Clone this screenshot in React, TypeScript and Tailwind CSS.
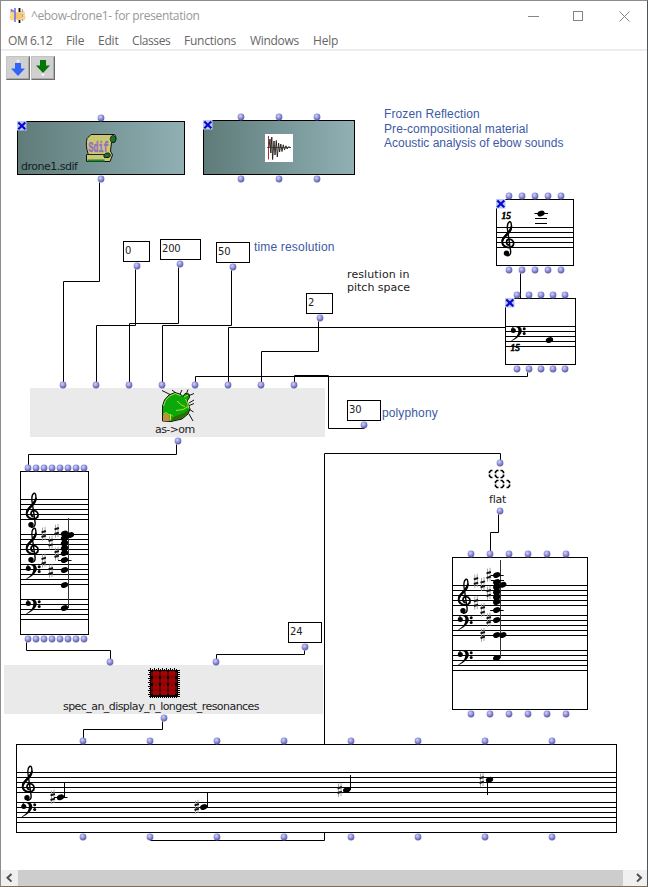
import React from "react";

type Pt = [number, number];

/* The patch canvas starts below the toolbar; nodes use window coordinates. */
const TOP = 82;
const at = (x: number, y: number) => ({ left: x, top: y - TOP });

function Defs() {
  return (
    <svg width="0" height="0" className="absolute">
      <defs>
        <radialGradient id="ball" cx="0.4" cy="0.35" r="0.65">
          <stop offset="0" stopColor="#d4d4ff" />
          <stop offset="0.45" stopColor="#9a9ae0" />
          <stop offset="1" stopColor="#5c5ca4" />
        </radialGradient>
      </defs>
    </svg>
  );
}

function Ports({ xs, y }: { xs: number[]; y: number }) {
  return (
    <>
      {xs.map((x) => (
        <svg key={x} width="8" height="8" viewBox="0 0 8 8" className="absolute" style={at(x - 4, y - 4)}>
          <circle cx="4" cy="4" r="3.4" fill="url(#ball)" />
        </svg>
      ))}
    </>
  );
}

function Treble({ x, y }: { x: number; y: number }) {
  return (
    <g transform={`translate(${x} ${y})`} fill="none" stroke="#000" strokeLinecap="round">
      <path d="M.6 2.6C-2.6 1.6-2-3.4 1.4-3.4 5-3.4 6.6.6 5 3" strokeWidth="1.7" />
      <path d="M5 3C2.6 6.200-5.600 5.400-5.800-.6-6-6 2.600-9 3.400-15.600" strokeWidth="2" />
      <path d="M3.400-15.600C3.600-19 2.600-21.400 1.600-20.800-1.200-19-.8-14-.2-11L2.600 8.400C3 11.600 1.400 13.400-1 13.200" strokeWidth="1.400" />
      <path d="M-5.400-2.400C-4.600-6 1-8.600 2.600-13" strokeWidth="2.300" />
      <circle cx="-1.500" cy="10.800" r="2.700" fill="#000" stroke="none" />
    </g>
  );
}

function Bass({ x, y }: { x: number; y: number }) {
  return (
    <g transform={`translate(${x} ${y})`}>
      <circle cx="-4.7" cy="-.6" r="2.5" />
      <path d="M-6.8-1C-6.6-6 3.8-6.8 3.8-.4 3.8 4-1.6 8.4-6.6 10.200L-6.600 9.400C-2.400 7 .4 3.600.4-.6.4-5-4.800-4.600-5.600-2.400Z" />
      <circle cx="6.200" cy="-2.200" r="1.500" />
      <circle cx="6.200" cy="2.600" r="1.500" />
    </g>
  );
}

function Staff({ x, w, y }: { x: number; w: number; y: number }) {
  return (
    <>
      {[0, 5, 10, 15, 20].map((d) => (
        <rect key={d} x={x} y={y + d} width={w} height="1" />
      ))}
    </>
  );
}

function Note({ x, y, ledger }: { x: number; y: number; ledger?: boolean }) {
  return (
    <>
      <ellipse cx={x} cy={y} rx="3.8" ry="2.7" transform={`rotate(-24 ${x} ${y})`} />
      {ledger && <rect x={x - 6.5} y={Math.floor(y)} width="13.500" height="1" />}
    </>
  );
}

function Sharp({ x, y }: { x: number; y: number }) {
  return (
    <g transform={`translate(${x} ${y})`}>
      <path d="M-1.200-6.400V6.800M1.300-7.200V6" stroke="#a09a9a" strokeWidth=".9" />
      <path d="M-2.200-1.600L2.200-3M-2.200 3L2.200 1.600" stroke="#111" strokeWidth="1.900" />
    </g>
  );
}

function Fifteen({ x, y }: { x: number; y: number }) {
  return (
    <text x={x} y={y} fontSize="10" fontWeight="bold" fontStyle="italic" fontFamily="Liberation Serif, serif" textLength="9.5" lengthAdjust="spacingAndGlyphs" stroke="#000" strokeWidth=".5">
      15
    </text>
  );
}

function Score({ x, y, w, h, children }: { x: number; y: number; w: number; h: number; children: React.ReactNode }) {
  return (
    <div className="absolute bg-white" style={{ ...at(x, y), width: w, height: h }}>
      <svg width={w} height={h} viewBox={`${x} ${y} ${w} ${h}`} className="block">
        {children}
        <rect x={x + 0.5} y={y + 0.5} width={w - 1} height={h - 1} fill="none" stroke="#000" />
      </svg>
    </div>
  );
}

function Lock({ x, y }: { x: number; y: number }) {
  return (
    <svg width="10" height="10" viewBox="0 0 10 10" className="absolute" style={at(x, y)}>
      <rect width="9.500" height="9.500" fill="#bcc8ec" />
      <path d="M1.300 1.500L8.300 8.300M8.300 1.500L1.300 8.300" stroke="#0808d4" strokeWidth="2.200" />
    </svg>
  );
}

function Value({ x, y, w, v }: { x: number; y: number; w: number; v: string }) {
  return (
    <div
      className="absolute h-[21px] border border-black bg-white pl-[1px] pt-[4px] font-['DejaVu_Sans',sans-serif] text-[10px] leading-[10px] tracking-[-0.2px] text-[#222]"
      style={{ ...at(x, y), width: w }}
    >
      {v}
    </div>
  );
}

function Label({ x, base, size = 11, className, children }: { x: number; base: number; size?: number; className: string; children: React.ReactNode }) {
  return (
    <span className={`absolute whitespace-pre leading-none ${className}`} style={{ ...at(x, base - Math.round(size * 0.846)), fontSize: size }}>
      {children}
    </span>
  );
}

const verdana = "font-['DejaVu_Sans',sans-serif] text-[#1c1c1c]";
const arial = "font-['Liberation_Sans',sans-serif] text-[#3c5aa6]";

const cords: Pt[][] = [
  [[99, 182], [99, 281], [63, 281], [63, 382]],
  [[135, 269], [135, 325], [96, 325], [96, 382]],
  [[178, 267], [178, 323], [129, 323], [129, 382]],
  [[231, 270], [231, 325], [162, 325], [162, 382]],
  [[505, 327], [228, 327], [228, 382]],
  [[527, 372], [527, 376], [195, 376], [195, 382]],
  [[318, 321], [318, 351], [261, 351], [261, 382]],
  [[364, 428], [328, 428], [328, 375], [294, 375], [294, 382]],
  [[520, 273], [520, 298]],
  [[176, 444], [176, 454], [28, 454], [28, 465]],
  [[26, 642], [26, 650], [110, 650], [110, 659]],
  [[304, 650], [304, 654], [216, 654], [216, 659]],
  [[162, 721], [162, 729], [83, 729], [83, 738]],
  [[150, 840], [324, 840], [324, 453], [500, 453], [500, 460]],
  [[498, 514], [498, 532], [490, 532], [490, 551]],
];

function SdifIcon() {
  return (
    <svg width="34" height="30" viewBox="0 0 34 30" className="absolute left-[67px] top-[11px]">
      <path d="M6 1.500H29C31.500 1.500 31.500 8.500 29 9.500H26.500L25.500 18 27.500 22 25 28.500H1.500L1.500 22 3 20.500C1 15 1 9 2 5.500Z" fill="#c9c873" stroke="#111" />
      <path d="M27.500 2.500C31.800 2 32 9.500 28 9.500 24.500 9.500 24.500 3.500 27.500 2.500Z" fill="#17762a" stroke="#111" strokeWidth=".8" />
      <path d="M2 21.500H20" stroke="#222" />
      <path d="M23 20C26 20 26 24.500 23 24.500H19.500C18 22.500 19.500 20 23 20Z" fill="#17762a" stroke="#111" />
      <path d="M2.500 27.500H19.500" stroke="#178a2a" strokeWidth="2" />
      <text x="3.500" y="18.500" textLength="20" lengthAdjust="spacingAndGlyphs" fontSize="14" fontWeight="bold" fontFamily="Liberation Mono, monospace" fill="#9370c4" stroke="#9370c4" strokeWidth=".6">
        Sdif
      </text>
    </svg>
  );
}

function WaveIcon() {
  return (
    <svg width="28" height="28" viewBox="0 0 28 28" className="absolute left-[61px] top-[13px]">
      <rect width="28" height="28" fill="#fff" />
      <path d="M4 13.500L5 5 5.800 19 6.800 3 7.600 25.500 9 7 10 21 11.300 6.500 12.300 23 13.600 9 14.600 18 15.800 10 17 17.500 18.300 10.800 19.500 16 21 11.800 22.200 15 23.500 12.800 25.500 13.500" fill="none" stroke="#201818" strokeWidth=".9" />
      <path d="M3.500 2V25.500" stroke="#a13232" />
      <path d="M2 13.500H26" stroke="#332" strokeWidth=".8" />
    </svg>
  );
}

function CactusIcon() {
  return (
    <svg width="34" height="34" viewBox="0 0 34 34" className="absolute" style={at(161, 389)}>
      <path d="M1 1.500L10 6M11 1L16 5M21 1L19 5M27 .5L25 6M33 4.500L27 7M33 11L28 14M28 20L32.500 23M28 25L32 32M27 17L33 14.500" stroke="#111" strokeWidth="1" />
      <path d="M1.500 32V17L3.500 11 8 6 14 3.500 20 5.500 22 7.500 24 4.500 28 5 28.500 8.500 26 12 29 20 27 25 21 30 10 32.500Z" fill="#0aa80a" stroke="#111" />
      <path d="M10 32L20 29.500 26.500 24.500 28.500 20 23 24 12 28Z" fill="#2d6d08" />
      <path d="M2.500 17L4.500 11.500 8.500 7 14 4.500 19.500 6.500" fill="none" stroke="#a8e048" />
      <path d="M24.500 10L26.500 14 28 19.500M23 8L27 6M16 12L20.500 16 24 17.500M28 17L22 20.500 15 21.500M2.500 25L5 23.500 8 26 10 25.500 12 27.500" fill="none" stroke="#b4df22" strokeWidth="1" />
      <path d="M2 26L5 24.500 8.500 27V32H2Z" fill="#c2913c" />
      <path d="M9.500 26V31.500" stroke="#e3d63e" />
    </svg>
  );
}

function ChipIcon() {
  const n = [0, 1, 2, 3, 4, 5, 6, 7, 8, 9, 10, 11, 12, 13];
  return (
    <svg width="32" height="32" viewBox="0 0 32 32" className="absolute" style={at(148, 668)}>
      {n.map((i) => (
        <g key={i} fill="#000">
          <rect x={2 + i * 2} y={i % 2} width="1" height={30 - (i % 2)} />
          <rect x={i % 2} y={2 + i * 2} width={32 - (i % 2)} height="1" />
        </g>
      ))}
      <rect x="2" y="2" width="28" height="26" fill="#0a0000" />
      {[4, 11, 18].map((y) => (
        <rect key={y} x="3" y={y} width="26" height="4" fill="#5e0a08" />
      ))}
      <rect x="3" y="23" width="26" height="3" fill="#5e0a08" />
      {[5, 13, 21].map((x) => (
        <rect key={x} x={x} y="3" width="6" height="24" fill="#8c0404" />
      ))}
      {[4, 11, 18, 23].map((y) => (
        <g key={y} fill="#ad0000">
          <rect x="5" y={y} width="6" height="3" />
          <rect x="13" y={y} width="6" height="3" />
          <rect x="21" y={y} width="6" height="3" />
        </g>
      ))}
    </svg>
  );
}

function FlatIcon() {
  return (
    <svg width="24" height="20" viewBox="0 0 24 20" className="absolute" style={at(488, 469)}>
      <g fill="none" stroke="#000" strokeWidth="1.700">
        <path d="M4.500 1.500H3L1.500 3V4.200M1.500 5.400V7L3 8.500H4.500" />
        <path d="M10.500 1.500H9L7.500 3V4.200M7.500 5.400V7L9 8.500H10.500" />
        <path d="M12.500 1.500H14L15.500 3V4.200M15.500 5.400V7L14 8.500H12.500" />
        <path d="M10.500 11.500H9L7.500 13V14.200M7.500 15.400V17L9 18.500H10.500" />
        <path d="M12.500 11.500H14L15.500 13V14.200M15.500 15.400V17L14 18.500H12.500" />
        <path d="M18.500 11.500H20L21.500 13V14.200M21.500 15.400V17L20 18.500H18.500" />
      </g>
    </svg>
  );
}

function TitleBar() {
  return (
    <header className="flex h-[29px] items-center pl-[8px]">
      <svg width="17" height="17" viewBox="0 0 17 17">
        <circle cx="4" cy="6" r="3" fill="#f9d48d" />
        <circle cx="13" cy="6.500" r="3" fill="#f9d48d" />
        <circle cx="3.500" cy="10.500" r="3" fill="#f9d48d" />
        <circle cx="13.500" cy="10.500" r="3" fill="#f9d48d" />
        <circle cx="9" cy="9" r="4" fill="#f2c678" />
        <path d="M6 1V15M2.500 2V4H5" fill="none" stroke="#7272e6" strokeWidth="1.600" />
        <path d="M10.500 1V5M10.500 13V16" stroke="#111" strokeWidth="1.800" />
        <path d="M13.500 2V14" stroke="#b59ac4" strokeDasharray="3 2" />
      </svg>
      <h1 className="ml-[5px] whitespace-pre font-['Open_Sans',sans-serif] text-[12px] leading-[16px] tracking-[-0.37px] text-[#999]">^ebow-drone1- for presentation</h1>
      <svg width="110" height="16" viewBox="0 0 110 16" className="ml-auto mr-[13px]" fill="none" stroke="#868686">
        <path d="M4 8.500H15" />
        <rect x="49.500" y="3.500" width="9" height="9" />
        <path d="M95.500 3.500L105.500 13.500M105.500 3.500L95.500 13.500" />
      </svg>
    </header>
  );
}

function MenuBar() {
  return (
    <nav className="flex h-[21px] border-b-2 border-[#ededed] pl-[7px] font-['Open_Sans',sans-serif] text-[12px] leading-[22px] text-[#666]">
      <span className="w-[58px] shrink-0 tracking-[-0.4px]">OM 6.12</span>
      <span className="w-[32px] shrink-0 tracking-[-0.2px]">File</span>
      <span className="w-[34px] shrink-0 tracking-[-0.2px]">Edit</span>
      <span className="w-[52px] shrink-0 tracking-[-0.4px]">Classes</span>
      <span className="w-[66px] shrink-0 tracking-[-0.25px]">Functions</span>
      <span className="w-[63px] shrink-0 tracking-[-0.3px]">Windows</span>
      <span className="tracking-[-0.2px]">Help</span>
    </nav>
  );
}

const toolButton =
  "flex h-[24px] w-[24px] items-center justify-center border border-b-[#6e6e6e] border-r-[#6e6e6e] border-l-[#c4c4c4] border-t-[#c4c4c4] bg-[#d0d0d0] shadow-[inset_-1px_-1px_0_#aaaaaa]";

function Toolbar() {
  return (
    <div className="flex h-[31px] gap-[1px] pl-[5px] pt-[5px]">
      <button className={toolButton}>
        <svg width="16" height="18" viewBox="0 0 16 18">
          <circle cx="8" cy="2" r="1.500" fill="#eef" />
          <path d="M5 4H11V9.500H15L8 17 1 9.500H5Z" fill="#3165f7" />
        </svg>
      </button>
      <button className={toolButton}>
        <svg width="16" height="18" viewBox="0 0 16 18">
          <circle cx="8" cy="15.500" r="1.500" fill="#eef" />
          <path d="M5 1H11V6.500H15L8 14 1 6.500H5Z" fill="#067506" />
        </svg>
      </button>
    </div>
  );
}

function Canvas() {
  const bottom = [83, 150, 217, 284, 351, 418, 485, 552];
  const right = [471, 490, 509, 528, 547, 566];
  const left = [28, 36, 44, 52, 60, 68, 76, 84];
  return (
    <main className="relative -ml-px h-[788px] w-[648px] shrink-0">
      <svg width="646" height="788" viewBox={`0 ${TOP} 646 788`} className="absolute left-0 top-0" fill="none" stroke="#000">
        {cords.map((c, i) => (
          <polyline key={i} points={c.map(([x, y]) => `${x + 0.5},${y + 0.5}`).join(" ")} />
        ))}
      </svg>

      <div className="absolute h-[54px] w-[168px] border border-black bg-linear-to-r from-[#5f7c7a] to-[#90b0b4]" style={at(17, 121)}>
        <SdifIcon />
      </div>
      <Lock x={17} y={121} />
      <Label x={21} base={170} className="font-['DejaVu_Sans',sans-serif] tracking-[-0.5px] text-[#14201f]">drone1.sdif</Label>
      <Ports xs={[101]} y={118} />
      <Ports xs={[101]} y={179} />

      <div className="absolute h-[55px] w-[152px] border border-black bg-linear-to-r from-[#5f7c7a] to-[#90b0b4]" style={at(203, 120)}>
        <WaveIcon />
      </div>
      <Lock x={203} y={120} />
      <Ports xs={[241, 279, 317]} y={117} />
      <Ports xs={[241, 279, 317]} y={179} />

      <Label x={384} base={118} size={12} className={`${arial} tracking-[0.1px]`}>Frozen Reflection</Label>
      <Label x={384} base={133} size={12} className={`${arial} tracking-[0.08px]`}>Pre-compositional material</Label>
      <Label x={384} base={147} size={12} className={arial}>Acoustic analysis of ebow sounds</Label>

      <Score x={496} y={199} w={78} h={67}>
        <Staff x={496} w={78} y={227} />
        <Treble x={508} y={242.500} />
        <Fifteen x={501.500} y={219} />
        <Note x={541} y={213.500} ledger />
        <rect x="535" y="218" width="12" height="1" />
        <rect x="535" y="223" width="12" height="1" />
      </Score>
      <Lock x={496} y={199} />
      <Ports xs={[509, 522, 535, 548, 561]} y={196} />
      <Ports xs={[509, 522, 535, 548, 561]} y={270} />

      <Score x={505} y={298} w={71} h={67}>
        <Staff x={505} w={71} y={326} />
        <Bass x={518} y={331} />
        <Fifteen x={510.500} y={351} />
        <Note x={549.500} y={340} />
      </Score>
      <Lock x={505} y={298} />
      <Ports xs={[517, 529, 541, 553, 565]} y={295} />
      <Ports xs={[517, 529, 541, 553, 565]} y={369} />

      <Value x={123} y={241} w={27} v="0" />
      <Ports xs={[137]} y={266} />
      <Value x={160} y={239} w={41} v="200" />
      <Ports xs={[180]} y={264} />
      <Value x={216} y={242} w={34} v="50" />
      <Ports xs={[233]} y={267} />
      <Label x={254} base={251} size={12} className={`${arial} tracking-[0.17px]`}>time resolution</Label>
      <Value x={306} y={293} w={27} v="2" />
      <Ports xs={[320]} y={318} />
      <Label x={347} base={278} className={`${verdana} tracking-[0.1px]`}>reslution in</Label>
      <Label x={347} base={291} className={verdana}>pitch space</Label>

      <div className="absolute h-[49px] w-[295px] bg-[#eaeaea]" style={at(30, 388)} />
      <CactusIcon />
      <Label x={155} base={433} className={`${verdana} tracking-[-0.6px]`}>{"as->om"}</Label>
      <Ports xs={[63, 96, 129, 162, 195, 228, 261, 294]} y={385} />
      <Ports xs={[178]} y={441} />
      <Value x={347} y={400} w={34} v="30" />
      <Ports xs={[364]} y={425} />
      <Label x={382} base={417} size={12} className={`${arial} tracking-[0.12px]`}>polyphony</Label>

      <Score x={20} y={471} w={69} h={164}>
        <Staff x={20} w={69} y={499} />
        <Staff x={20} w={69} y={534} />
        <Staff x={20} w={69} y={564} />
        <Staff x={20} w={69} y={599} />
        <Treble x={32.500} y={514} />
        <Treble x={32.500} y={549} />
        <Bass x={33} y={569} />
        <Bass x={33} y={604} />
        <rect x="68" y="518" width="1" height="90" fill="#333" />
        {[533.500, 538, 543, 548, 553, 570, 585, 608].map((y) => (
          <Note key={y} x={64.500} y={y} />
        ))}
        <rect x="62" y="534" width="5" height="20" />
        <Note x={64.500} y={560} ledger />
        <Note x={70.500} y={535} />
        {([[43.700, 534], [56.700, 531], [50.700, 542.700], [56.700, 554], [43.700, 560.700], [50.700, 571]] as Pt[]).map(([x, y]) => (
          <Sharp key={`${x}-${y}`} x={x} y={y} />
        ))}
      </Score>
      <Ports xs={left} y={468} />
      <Ports xs={left} y={639} />

      <Value x={288} y={622} w={34} v="24" />
      <Ports xs={[305]} y={647} />

      <div className="absolute h-[49px] w-[319px] bg-[#eaeaea]" style={at(4, 665)} />
      <ChipIcon />
      <Label x={63} base={710} className={`${verdana} tracking-[-0.56px]`}>spec_an_display_n_longest_resonances</Label>
      <Ports xs={[110, 216]} y={662} />
      <Ports xs={[164]} y={718} />

      <FlatIcon />
      <Label x={489} base={503} className={`${verdana} tracking-[-0.2px]`}>flat</Label>
      <Ports xs={[500]} y={463} />
      <Ports xs={[500]} y={511} />

      <Score x={452} y={557} w={136} h={153}>
        <Staff x={452} w={136} y={585} />
        <Staff x={452} w={136} y={615} />
        <Staff x={452} w={136} y={650} />
        <Treble x={464.500} y={600} />
        <Bass x={465} y={620} />
        <Bass x={465} y={655} />
        <rect x="500" y="560" width="1" height="98" fill="#333" />
        {[582, 587, 592, 597, 602, 620, 635, 658].map((y) => (
          <Note key={y} x={496.700} y={y} />
        ))}
        <rect x="494" y="582" width="5.500" height="20" />
        <Note x={496.700} y={575} ledger />
        <rect x="491" y="580" width="13" height="1" />
        <Note x={496.700} y={610} ledger />
        <Note x={502.800} y={584.700} />
        <Note x={502.800} y={635} />
        {([[488.700, 575], [476, 581], [482.700, 584.300], [488.700, 593], [476, 603], [482.700, 610], [488.700, 620], [482.700, 635]] as Pt[]).map(([x, y]) => (
          <Sharp key={`${x}-${y}`} x={x} y={y} />
        ))}
      </Score>
      <Ports xs={right} y={554} />
      <Ports xs={right} y={714} />

      <Score x={16} y={744} w={601} h={89}>
        <Staff x={16} w={601} y={772} />
        <Staff x={16} w={601} y={802} />
        <Treble x={28.500} y={787} />
        <Bass x={28.500} y={807} />
        <Sharp x={52.700} y={797} />
        <Note x={60.500} y={797.300} ledger />
        <rect x="64" y="782" width="1" height="15" />
        <Sharp x={196.700} y={807} />
        <Note x={203.700} y={807} />
        <rect x="207" y="792" width="1" height="15" />
        <Sharp x={339.700} y={790} />
        <Note x={346.700} y={790} />
        <rect x="350" y="775" width="1" height="15" />
        <Sharp x={481.700} y={780} />
        <Note x={489.500} y={779.700} />
        <rect x="487" y="780" width="1" height="15" />
      </Score>
      <Ports xs={bottom} y={741} />
      <Ports xs={bottom} y={837} />
    </main>
  );
}

function ScrollBar() {
  return (
    <div className="flex h-[16px] bg-[#f0f0f0]">
      <svg width="17" height="16" viewBox="0 0 17 16" fill="none" stroke="#505050" strokeWidth="2">
        <path d="M10.500 4L6.500 7.800 10.500 11.600" />
      </svg>
      <div className="flex-1 bg-[#cdcdcd]" />
      <svg width="24" height="16" viewBox="0 0 24 16" fill="none" stroke="#505050" strokeWidth="2">
        <path d="M14 4L18 7.800 14 11.600" />
      </svg>
    </div>
  );
}

export default function App() {
  return (
    <div className="flex h-[887px] w-[648px] flex-col overflow-hidden border border-b-[#77705f] border-l-[#8c8c8c] border-r-[#4e545c] border-t-[#8c8c8c] bg-white">
      <Defs />
      <TitleBar />
      <MenuBar />
      <Toolbar />
      <Canvas />
      <ScrollBar />
    </div>
  );
}
